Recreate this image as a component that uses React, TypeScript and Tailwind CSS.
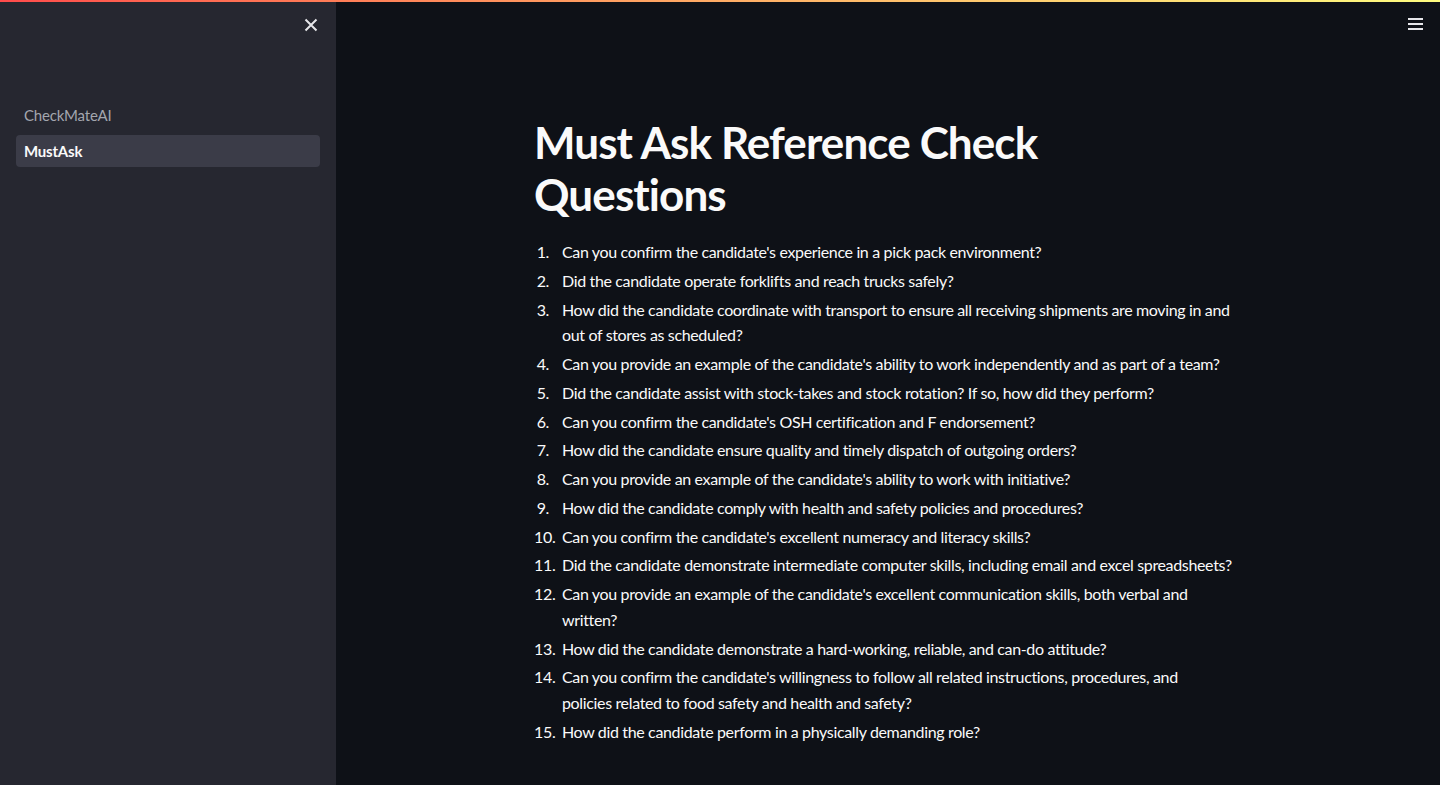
import React from "react";

const questions: string[][] = [
  ["Can you confirm the candidate's experience in a pick pack environment?"],
  ["Did the candidate operate forklifts and reach trucks safely?"],
  [
    "How did the candidate coordinate with transport to ensure all receiving shipments are moving in and",
    "out of stores as scheduled?",
  ],
  ["Can you provide an example of the candidate's ability to work independently and as part of a team?"],
  ["Did the candidate assist with stock-takes and stock rotation? If so, how did they perform?"],
  ["Can you confirm the candidate's OSH certification and F endorsement?"],
  ["How did the candidate ensure quality and timely dispatch of outgoing orders?"],
  ["Can you provide an example of the candidate's ability to work with initiative?"],
  ["How did the candidate comply with health and safety policies and procedures?"],
  ["Can you confirm the candidate's excellent numeracy and literacy skills?"],
  ["Did the candidate demonstrate intermediate computer skills, including email and excel spreadsheets?"],
  [
    "Can you provide an example of the candidate's excellent communication skills, both verbal and",
    "written?",
  ],
  ["How did the candidate demonstrate a hard-working, reliable, and can-do attitude?"],
  [
    "Can you confirm the candidate's willingness to follow all related instructions, procedures, and",
    "policies related to food safety and health and safety?",
  ],
  ["How did the candidate perform in a physically demanding role?"],
];

const pages = [
  { id: 0, label: "CheckMateAI", active: false },
  { id: 1, label: "MustAsk", active: true },
];

function Sidebar() {
  return (
    <aside className="w-[336px] shrink-0 bg-[#262730] flex flex-col">
      <div className="flex justify-end pr-[17px] pt-[15px]">
        <button aria-label="Close sidebar" className="w-[16px] h-[16px] flex items-center justify-center text-[#e6e6ea]">
          <svg width="14" height="14" viewBox="0 0 14 14" fill="none" stroke="currentColor" strokeWidth="2">
            <path d="M1.5 1.5 L12.5 12.5 M12.5 1.5 L1.5 12.5" />
          </svg>
        </button>
      </div>
      <nav className="px-4 pt-[66px] flex flex-col gap-[4px]">
        {pages.map((p) => (
          <a
            key={p.id}
            href="#"
            className={
              p.active
                ? "h-8 flex items-center px-2 rounded bg-[#3b3c48] text-[#fafafa] font-bold text-[15px] tracking-[-0.2px]"
                : "h-8 flex items-center px-2 rounded text-[#a3a6ae] text-[15px] tracking-[-0.2px]"
            }
          >
            {p.label}
          </a>
        ))}
      </nav>
    </aside>
  );
}

export default function App() {
  return (
    <div className="w-[1440px] h-[785px] flex flex-col bg-[#0e1117] text-[#fafafa] font-['Lato','Liberation_Sans',sans-serif] overflow-hidden">
      <div className="h-[2px] shrink-0 bg-gradient-to-r from-[#ff4b4b] to-[#fffd80]" />
      <div className="flex flex-1 min-h-0">
        <Sidebar />
        <main className="flex-1 relative">
          <button aria-label="Menu" className="absolute right-[16px] top-[14px] w-[16px] h-[16px] flex flex-col justify-center gap-[3px]">
            <span className="block h-[2px] w-[15px] bg-[#e6e6ea]" />
            <span className="block h-[2px] w-[15px] bg-[#e6e6ea]" />
            <span className="block h-[2px] w-[15px] bg-[#e6e6ea]" />
          </button>
          <div className="w-[736px] mx-auto pl-[14px] pr-[18px] pt-[114px]">
            <h1 className="text-[44px] leading-[52px] font-bold tracking-[-0.9px]">
              Must Ask Reference Check
              <br />
              Questions
            </h1>
            <ol className="mt-[19px] text-[16px] tracking-[-0.35px]">
              {questions.map((lines, i) => (
                <li key={i} className="flex leading-[25.6px] mb-[3.2px]">
                  <span className="w-[28px] pr-[13px] shrink-0 text-right whitespace-nowrap">{i + 1}.</span>
                  <span className="whitespace-nowrap">
                    {lines.map((l, j) => (
                      <React.Fragment key={j}>
                        {j > 0 && <br />}
                        {l}
                      </React.Fragment>
                    ))}
                  </span>
                </li>
              ))}
            </ol>
          </div>
        </main>
      </div>
    </div>
  );
}
